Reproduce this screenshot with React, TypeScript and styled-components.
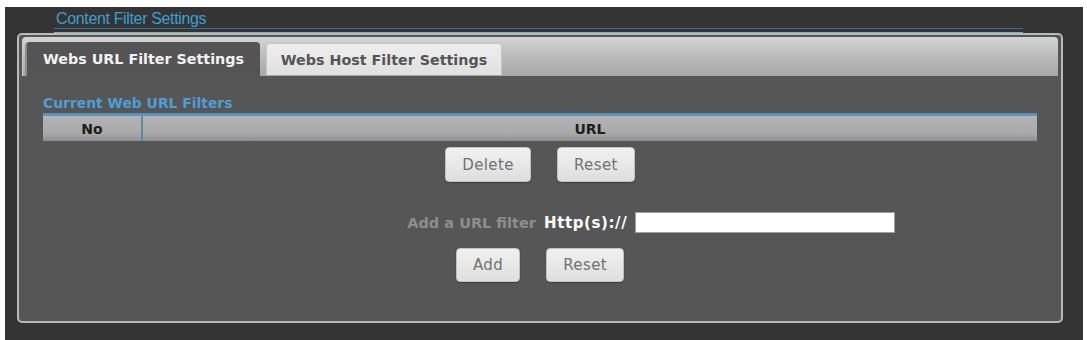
import React from 'react';
import styled, { createGlobalStyle } from 'styled-components';

const GlobalStyle = createGlobalStyle`
  html, body {
    margin: 0;
    padding: 0;
    background: #ffffff;
  }
  body {
    font-family: "DejaVu Sans", Verdana, sans-serif;
  }
`;

const Frame = styled.div`
  margin: 7px 4px 0 5px;
  height: 333px;
  background: #343434;
  box-sizing: border-box;
  padding-top: 3px;
`;

const PageTitle = styled.div`
  margin-left: 51px;
  font-family: "Liberation Sans Narrow", "Liberation Sans", Arial, sans-serif;
  font-size: 16px;
  line-height: 18px;
  color: #3b9fd2;
  letter-spacing: -0.35px;
`;

const TitleRule = styled.div`
  margin: 0 60px 0 49px;
  height: 3px;
  border-top: 1px solid #3d6f8e;
  border-bottom: 1px solid #86a9be;
`;

const Panel = styled.div`
  margin: 0 20px 0 12px;
  height: 290px;
  box-sizing: border-box;
  border: 2px solid #b9b9b9;
  border-radius: 5px;
  background: #565656;
  padding: 2px 3px 0 3px;
`;

const TabBar = styled.div`
  display: flex;
  align-items: flex-end;
  height: 39px;
  box-sizing: border-box;
  padding: 0 0 0 2px;
  border-radius: 4px 4px 0 0;
  background: linear-gradient(#d3d5d5, #b9b9b9 55%, #a7a7a7);
  border-left: 1px solid #c9c9c9;
`;

const Tab = styled.div<{ $active?: boolean }>`
  display: flex;
  align-items: center;
  justify-content: center;
  box-sizing: border-box;
  font-size: 14.3px;
  font-weight: bold;
  border-radius: 4px 4px 0 0;
  ${({ $active }) =>
    $active
      ? `
    width: 235px;
    height: 34px;
    background: #545454;
    color: #f2f2f2;
    border-left: 2px solid #8c8c8c;
  `
      : `
    width: 236px;
    height: 32px;
    margin-left: 6px;
    margin-bottom: 1px;
    background: linear-gradient(#eeeeee, #e0e0e0);
    color: #555555;
    border: 1px solid #c4c4c4;
    border-bottom: none;
  `}
`;

const Content = styled.div`
  padding: 19px 21px 0 21px;
`;

const SectionTitle = styled.div`
  font-size: 13.9px;
  font-weight: bold;
  line-height: 16px;
  color: #4c9fd6;
  padding-bottom: 2px;
  border-bottom: 2px solid #4e94c2;
`;

const HeaderRow = styled.div`
  display: grid;
  grid-template-columns: 100px 1fr;
  height: 25px;
  border-top: 1px solid #6f95ab;
  background: linear-gradient(#b4b2b4, #a9a8aa 70%, #8e8e90);
`;

const HeaderCell = styled.div<{ $first?: boolean }>`
  display: flex;
  align-items: center;
  justify-content: center;
  font-size: 14px;
  font-weight: bold;
  color: #1e1e1e;
  ${({ $first }) => ($first ? 'border-right: 2px solid #5b8aa4;' : '')}
`;

const ButtonRow = styled.div<{ $top: number }>`
  display: flex;
  justify-content: center;
  gap: 26px;
  margin-top: ${({ $top }) => $top}px;
`;

const Button = styled.button<{ $h?: number }>`
  height: ${({ $h }) => $h ?? 35}px;
  padding: 0 16px;
  font-family: "DejaVu Sans", Verdana, sans-serif;
  font-size: 15px;
  letter-spacing: 0.4px;
  color: #727272;
  background: linear-gradient(#f1f1f1, #dedede);
  border: 1px solid #c2c2c2;
  border-radius: 4px;
  box-shadow: 0 1px 1px rgba(0, 0, 0, 0.25);
`;

const FilterRow = styled.div`
  display: grid;
  grid-template-columns: 1fr 1fr;
  align-items: center;
  margin-top: 30px;
  height: 21px;
`;

const FilterLabel = styled.div`
  text-align: right;
  padding-right: 4px;
  font-size: 14.5px;
  color: #8e8e8e;
  font-weight: bold;
`;

const FilterField = styled.div`
  display: flex;
  align-items: center;
  gap: 8px;
  padding-left: 4px;
`;

const Scheme = styled.span`
  font-size: 15px;
  font-weight: bold;
  color: #ffffff;
  letter-spacing: 0.6px;
`;

const UrlInput = styled.input`
  width: 260px;
  height: 21px;
  box-sizing: border-box;
  border: 1px solid #a0a0a0;
  background: #ffffff;
  padding: 0 3px;
  outline: none;
`;

export default function App() {
  return (
    <>
      <GlobalStyle />
      <Frame>
        <PageTitle>Content Filter Settings</PageTitle>
        <TitleRule />
        <Panel>
          <TabBar>
            <Tab $active>Webs URL Filter Settings</Tab>
            <Tab>Webs Host Filter Settings</Tab>
          </TabBar>
          <Content>
            <SectionTitle>Current Web URL Filters</SectionTitle>
            <HeaderRow>
              <HeaderCell $first>No</HeaderCell>
              <HeaderCell>URL</HeaderCell>
            </HeaderRow>
            <ButtonRow $top={6}>
              <Button>Delete</Button>
              <Button>Reset</Button>
            </ButtonRow>
            <FilterRow>
              <FilterLabel>Add a URL filter</FilterLabel>
              <FilterField>
                <Scheme>Http(s)://</Scheme>
                <UrlInput type="text" />
              </FilterField>
            </FilterRow>
            <ButtonRow $top={15}>
              <Button $h={34}>Add</Button>
              <Button $h={34}>Reset</Button>
            </ButtonRow>
          </Content>
        </Panel>
      </Frame>
    </>
  );
}
